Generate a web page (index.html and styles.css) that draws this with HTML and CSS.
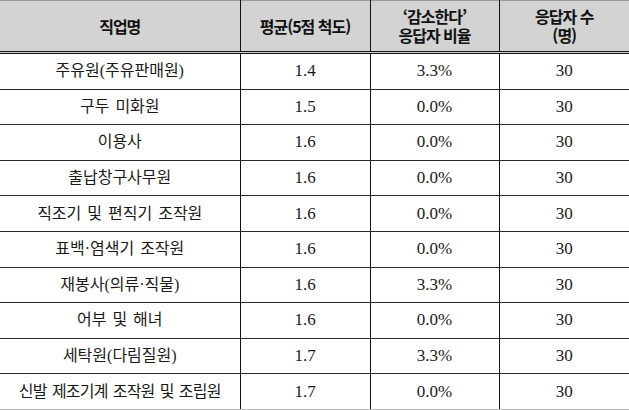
FILE: index.html
```html
<!DOCTYPE html>
<html lang="ko">
<head>
<meta charset="utf-8">
<link rel="stylesheet" href="styles.css">
</head>
<body>
<table class="tbl">
  <colgroup>
    <col class="c1"><col class="c2"><col class="c3"><col class="c4">
  </colgroup>
  <thead>
    <tr class="head">
      <th>직업명</th>
      <th>평균(5점 척도)</th>
      <th>‘감소한다’<br>응답자 비율</th>
      <th>응답자 수<br>(명)</th>
    </tr>
  </thead>
  <tbody>
    <tr><td class="name">주유원(주유판매원)</td><td class="num">1.4</td><td class="num">3.3%</td><td class="num">30</td></tr>
    <tr><td class="name">구두 미화원</td><td class="num">1.5</td><td class="num">0.0%</td><td class="num">30</td></tr>
    <tr><td class="name">이용사</td><td class="num">1.6</td><td class="num">0.0%</td><td class="num">30</td></tr>
    <tr><td class="name">출납창구사무원</td><td class="num">1.6</td><td class="num">0.0%</td><td class="num">30</td></tr>
    <tr><td class="name">직조기 및 편직기 조작원</td><td class="num">1.6</td><td class="num">0.0%</td><td class="num">30</td></tr>
    <tr><td class="name">표백·염색기 조작원</td><td class="num">1.6</td><td class="num">0.0%</td><td class="num">30</td></tr>
    <tr><td class="name">재봉사(의류·직물)</td><td class="num">1.6</td><td class="num">3.3%</td><td class="num">30</td></tr>
    <tr><td class="name">어부 및 해녀</td><td class="num">1.6</td><td class="num">0.0%</td><td class="num">30</td></tr>
    <tr><td class="name">세탁원(다림질원)</td><td class="num">1.7</td><td class="num">3.3%</td><td class="num">30</td></tr>
    <tr class="last"><td class="name tight">신발 제조기계 조작원 및 조립원</td><td class="num">1.7</td><td class="num">0.0%</td><td class="num">30</td></tr>
  </tbody>
</table>
</body>
</html>
```

FILE: styles.css
```css
html, body {
  margin: 0;
  padding: 0;
  background: #ffffff;
}

.tbl {
  width: 629px;
  border-collapse: collapse;
  table-layout: fixed;
  font-family: "Liberation Serif", "Noto Sans CJK KR", serif;
  color: #1a1a1a;
}

.c1 { width: 240px; }
.c2 { width: 130px; }
.c3 { width: 129px; }
.c4 { width: 130px; }

.tbl th,
.tbl td {
  padding: 0;
  text-align: center;
  vertical-align: middle;
  border-left: 1px solid #111111;
  border-right: 1px solid #111111;
}

.tbl th:first-child,
.tbl td:first-child {
  border-left: none;
}

.tbl th:last-child,
.tbl td:last-child {
  border-right: none;
}

.head th {
  height: 50px;
  background: #d3d3d3;
  border-top: 1px solid #9a9a9a;
  border-bottom: 3px double #111111;
  font-family: "Noto Sans CJK KR", sans-serif;
  font-weight: 700;
  font-size: 16px;
  line-height: 19px;
  letter-spacing: -1px;
  color: #111111;
}

.tbl td {
  height: 34.6px;
  border-bottom: 1px solid #2a2a2a;
  font-size: 16px;
  line-height: 20px;
}

.tbl td.name {
  font-size: 16px;
  word-spacing: 2px;
}

.tbl td.name.tight {
  letter-spacing: -0.8px;
}

.tbl td.num {
  font-size: 17px;
}

.tbl tr.last td {
  border-bottom: 1px solid #b5b5b5;
}
```
